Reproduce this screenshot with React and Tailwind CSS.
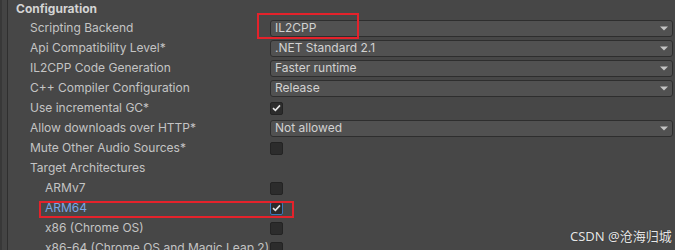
import React from 'react';

const Arrow = () => (
  <svg width="8" height="5" viewBox="0 0 8 5" className="mr-[4px]">
    <path d="M0 0.5 H8 L4 4.5 Z" fill="#c4c4c4" />
  </svg>
);

const Dropdown = ({ value }) => (
  <div className="flex items-center justify-between h-[17px] w-[403px] rounded-[3px] border border-[#2e2e2e] bg-[#515151] pl-[4px] text-[12px] text-[#d2d2d2]">
    <span>{value}</span>
    <Arrow />
  </div>
);

const Checkbox = ({ checked, active }) => (
  <div
    className={`flex items-center justify-center w-[13px] h-[13px] rounded-[2px] border ${
      active ? 'border-[#3a79bb] bg-[#2b2b2b]' : 'border-[#232323] bg-[#2c2c2c]'
    }`}
  >
    {checked && (
      <svg width="9" height="8" viewBox="0 0 9 8">
        <path d="M1 4.2 L3.4 6.4 L8 1.4" fill="none" stroke="#e4e4e4" strokeWidth="1.6" />
      </svg>
    )}
  </div>
);

const Row = ({ label, indent, blue, children }) => (
  <div className="flex items-center h-5">
    <div
      className={`w-[270px] shrink-0 text-[12px] ${indent ? 'pl-[45px]' : 'pl-[30px]'} ${
        blue ? 'text-[#7ba6e4]' : 'text-[#c4c4c4]'
      }`}
    >
      {label}
    </div>
    {children}
  </div>
);

export default function App() {
  return (
    <div
      className="relative w-[675px] h-[250px] overflow-hidden bg-[#474747] flex"
      style={{ fontFamily: 'Inter, "Noto Sans", sans-serif' }}
    >
      {/* left edge strips */}
      <div className="w-[2px] bg-[#383838] shrink-0" />
      <div className="w-[5px] bg-[#444444] shrink-0" />
      <div className="w-[1px] bg-[#2f2f2f] shrink-0" />

      <div className="flex-1 -ml-[8px]">
        <div className="h-[18px] flex items-center pl-[16px] text-[12px] font-bold text-[#d4d4d4]">
          Configuration
        </div>
        <Row label="Scripting Backend"><Dropdown value="IL2CPP" /></Row>
        <Row label="Api Compatibility Level*"><Dropdown value=".NET Standard 2.1" /></Row>
        <Row label="IL2CPP Code Generation"><Dropdown value="Faster runtime" /></Row>
        <Row label="C++ Compiler Configuration"><Dropdown value="Release" /></Row>
        <Row label="Use incremental GC*"><Checkbox checked /></Row>
        <Row label="Allow downloads over HTTP*"><Dropdown value="Not allowed" /></Row>
        <Row label="Mute Other Audio Sources*"><Checkbox /></Row>
        <Row label="Target Architectures" />
        <Row label="ARMv7" indent><Checkbox /></Row>
        <Row label="ARM64" indent blue><Checkbox checked active /></Row>
        <Row label="x86 (Chrome OS)" indent><Checkbox /></Row>
        <Row label="x86-64 (Chrome OS and Magic Leap 2)" indent><Checkbox /></Row>
      </div>

      {/* red annotation boxes */}
      <div className="absolute left-[257px] top-[13px] w-[102px] h-[26px] border-2 border-[#e4222b]" />
      <div className="absolute left-[39px] top-[201px] w-[255px] h-[17px] border-2 border-[#e4222b]" />

      {/* watermark */}
      <div
        className="absolute left-[570px] top-[227px] text-[13px] text-[#e6e6e6] whitespace-nowrap"
        style={{ fontFamily: '"Noto Sans", "Noto Sans CJK SC", sans-serif', textShadow: '0 0 1px #222' }}
      >
        CSDN @沧海归城
      </div>
    </div>
  );
}
